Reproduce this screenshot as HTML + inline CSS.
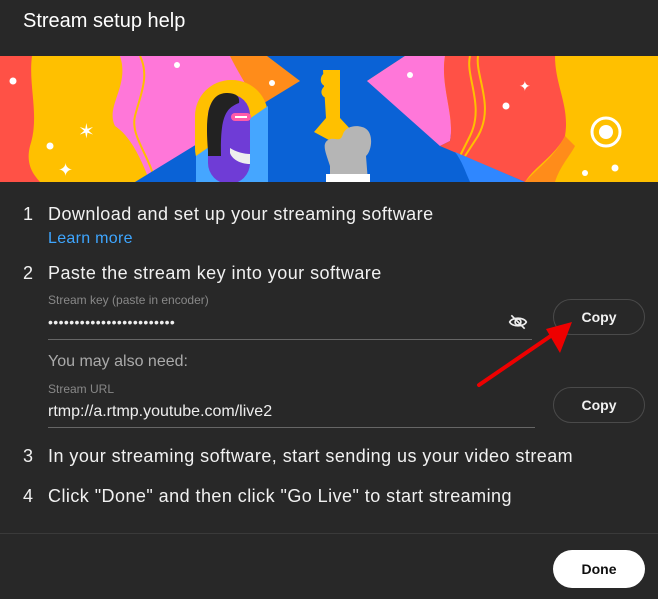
<!DOCTYPE html>
<html><head><meta charset="utf-8"><style>
*{margin:0;padding:0;box-sizing:border-box}
body{width:658px;height:599px;background:#282828;font-family:"Liberation Sans",Arial,sans-serif;color:#fff;position:relative;overflow:hidden}
.a{position:absolute;white-space:nowrap}
.step{font-size:18px;color:#f1f1f1;letter-spacing:0.45px}
.btn{position:absolute;border:1px solid #4a4a4a;border-radius:18px;width:92px;height:36px;color:#f1f1f1;font-size:14px;font-weight:bold;text-align:center;line-height:34px}
</style></head><body>
<div class="a" style="left:23px;top:10px;font-size:20px">Stream setup help</div>
<svg class="a" style="left:0;top:56px" width="658" height="126" viewBox="0 0 658 126">
<rect width="658" height="126" fill="#ffc000"/>
<path d="M0 0H32C28 30 40 60 30 90C25 110 35 120 40 126H0Z" fill="#ff5146"/>
<path d="M120 0H230L262 55L140 126H150C140 100 130 80 115 70C105 50 130 30 120 0Z" fill="#ff77d9"/>
<path d="M140 0C150 20 140 40 135 60C130 80 150 100 155 126" fill="none" stroke="#ffc000" stroke-width="2"/>
<path d="M230 0H267L300 25L262 55C250 35 240 20 230 0Z" fill="#ff8c1a"/>
<path d="M267 0H405L367 25L525 126H135L300 25Z" fill="#0a62d6"/>
<path d="M405 0H445C440 30 455 60 450 85L440 90L367 25Z" fill="#ff77d9"/>
<path d="M445 0H555C555 30 570 50 565 80C555 100 535 110 525 126L440 90L450 85C455 60 440 30 445 0Z" fill="#ff5146"/>
<path d="M470 0C465 20 485 50 470 80L460 100M478 0C475 20 495 50 478 80L465 100" fill="none" stroke="#ffc000" stroke-width="2"/>
<path d="M455 96L525 126H470C465 115 462 105 455 96Z" fill="#2f87ff"/>
<path d="M565 80C555 100 540 110 525 126H555C560 110 570 100 575 90Z" fill="#ff8c1a"/>
<rect x="195" y="24" width="73" height="104" rx="36" fill="#ffc000"/>
<path d="M196 100L268 50V128H196Z" fill="#45a6ff"/>
<rect x="208" y="38" width="42" height="90" rx="21" fill="#6f3cd6"/>
<path d="M208 95C205 60 208 38 226 37C236 37 240 40 239 47C226 52 220 60 221 100L208 100Z" fill="#222"/>
<rect x="231" y="57" width="20" height="8" rx="4" fill="#ff5aa8"/>
<rect x="235" y="60" width="12" height="2" fill="#fff"/>
<path d="M230 92C236 96 244 98 250 98V108C240 108 232 103 230 97Z" fill="#eee"/>
<path d="M323 14H340V62L353 76L340 90L314 76L326 62Z" fill="#ffc000"/>
<path d="M328 15C319 18 319 28 325 30C319 34 321 42 328 42" fill="#ffc000"/>
<path d="M330 110C325 95 322 88 328 84C335 80 340 88 343 78C346 70 356 69 362 71C375 74 372 95 366 100L368 126H330Z" fill="#b5b5b5"/>
<rect x="326" y="118" width="44" height="8" fill="#fff"/>
<circle cx="606" cy="76" r="14" fill="none" stroke="#fff" stroke-width="3"/>
<circle cx="606" cy="76" r="7" fill="#fff"/>
<circle cx="13" cy="25" r="3.5" fill="#fff"/><circle cx="50" cy="90" r="3.5" fill="#fff"/>
<circle cx="177" cy="9" r="3" fill="#fff"/><circle cx="272" cy="27" r="3" fill="#fff"/>
<circle cx="410" cy="19" r="3" fill="#fff"/><circle cx="506" cy="50" r="3.5" fill="#fff"/>
<circle cx="615" cy="112" r="3.5" fill="#fff"/><circle cx="585" cy="117" r="3" fill="#fff"/>
<text x="78" y="82" font-size="20" fill="#fff">✶</text><text x="58" y="120" font-size="18" fill="#fff">✦</text>
<text x="519" y="35" font-size="14" fill="#fff">✦</text>
</svg>
<div class="a step" style="left:23px;top:204px">1</div>
<div class="a step" style="left:48px;top:204px">Download and set up your streaming software</div>
<div class="a" style="left:48px;top:230px;font-size:16px;color:#3ea6ff;letter-spacing:0.3px">Learn more</div>
<div class="a step" style="left:23px;top:263px">2</div>
<div class="a step" style="left:48px;top:263px">Paste the stream key into your software</div>
<div class="a" style="left:48px;top:293px;font-size:12px;color:#888">Stream key (paste in encoder)</div>
<div class="a" style="left:48px;top:314px;font-size:14px;color:#eee;letter-spacing:0.4px">••••••••••••••••••••••••</div>
<svg class="a" style="left:507px;top:312px" width="22" height="20" viewBox="0 0 24 24"><path d="M2 12C5 6 19 6 22 12C19 18 5 18 2 12Z" fill="none" stroke="#eee" stroke-width="2"/><circle cx="12" cy="12" r="3.5" fill="none" stroke="#eee" stroke-width="2"/><path d="M4 4L20 20" stroke="#eee" stroke-width="2"/></svg>
<div class="a" style="left:48px;top:339px;width:484px;height:1px;background:#666"></div>
<div class="btn" style="left:553px;top:299px">Copy</div>
<div class="a" style="left:48px;top:353px;font-size:16px;color:#aaa">You may also need:</div>
<div class="a" style="left:48px;top:382px;font-size:12px;color:#888">Stream URL</div>
<div class="a" style="left:48px;top:403px;font-size:16px;color:#eee">rtmp://a.rtmp.youtube.com/live2</div>
<div class="a" style="left:48px;top:427px;width:487px;height:1px;background:#666"></div>
<div class="btn" style="left:553px;top:387px">Copy</div>
<svg class="a" style="left:470px;top:315px" width="110" height="80"><path d="M9 70L88 16" stroke="#e00" stroke-width="4" stroke-linecap="round"/><path d="M102 7L76 14L90 38Z" fill="#e00"/></svg>
<div class="a step" style="left:23px;top:446px">3</div>
<div class="a step" style="left:48px;top:446px">In your streaming software, start sending us your video stream</div>
<div class="a step" style="left:23px;top:486px">4</div>
<div class="a step" style="left:48px;top:486px">Click "Done" and then click "Go Live" to start streaming</div>
<div class="a" style="left:0;top:533px;width:658px;height:1px;background:#3a3a3a"></div>
<div class="btn" style="left:553px;top:550px;height:38px;line-height:38px;border-radius:19px;background:#fff;color:#0f0f0f;border:none">Done</div>
</body></html>
